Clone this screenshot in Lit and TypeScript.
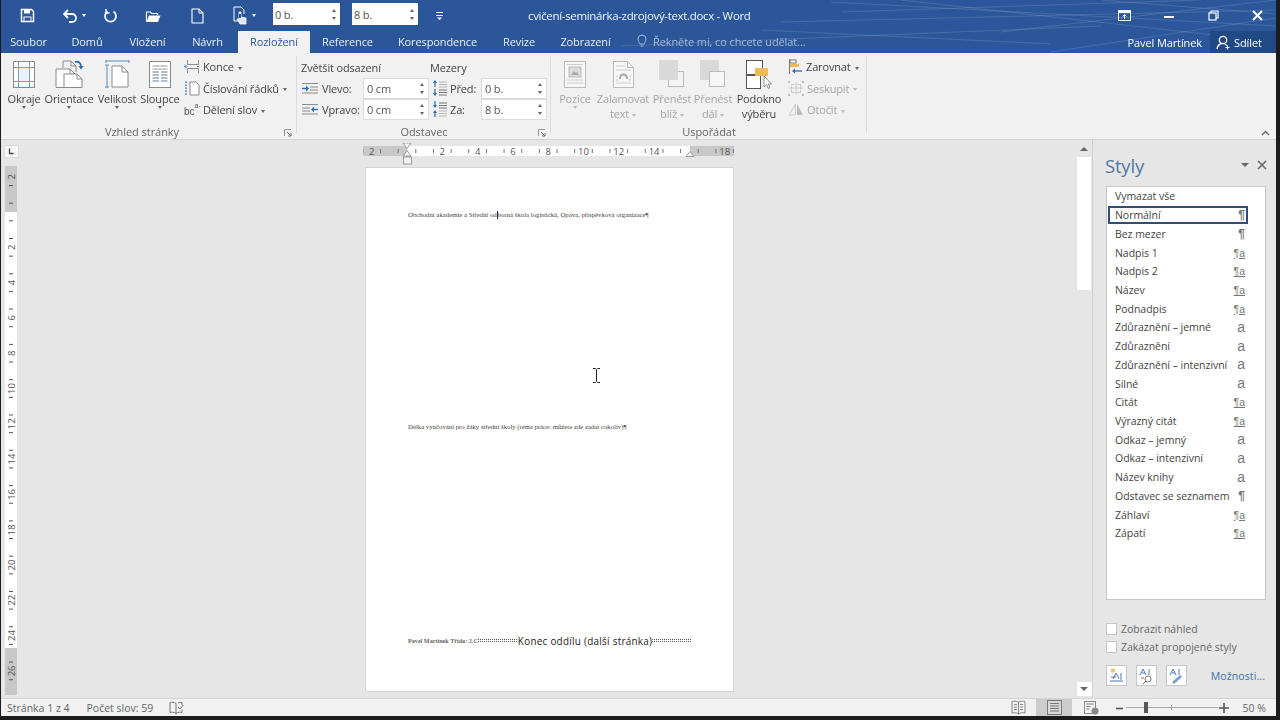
import { LitElement, html, css, svg } from "lit";
import { customElement } from "lit/decorators.js";

const caret = html`<i class="caret"></i>`;
const ic = (w: number, h: number, body: unknown) =>
  html`<svg class="ic" width=${w} height=${h} viewBox="0 0 ${w} ${h}" fill="none">${body}</svg>`;

const I = {
  save: ic(15, 15, svg`<path d="M1.5 1.5h10l2 2v10h-12z" stroke="#fff" stroke-width="1.5"/><rect x="4" y="2" width="6" height="3.5" fill="#fff"/><rect x="4" y="9" width="7" height="4.5" stroke="#fff"/>`),
  undo: ic(16, 15, svg`<path d="M3 6h7a4 4 0 0 1 0 8H7" stroke="#fff" stroke-width="1.8"/><path d="M6 2L2 6l4 4" stroke="#fff" stroke-width="1.8"/>`),
  redo: ic(15, 15, svg`<path d="M4.5 3.5a5.5 5.5 0 1 0 6 0" stroke="#fff" stroke-width="1.8"/><path d="M3 1v4h3.5" stroke="#fff" stroke-width="1.4"/>`),
  open: ic(17, 14, svg`<path d="M1.5 12.5V3h4l1 1.5h6V6" stroke="#fff" stroke-width="1.2"/><path d="M1.5 13h11.5l2.5-6.5H4z" fill="#fff"/>`),
  fresh: ic(13, 16, svg`<path d="M1 1h7l4 4v10H1z" stroke="#fff" stroke-width="1.1"/><path d="M8 1v4h4" stroke="#fff"/>`),
  touch: ic(17, 19, svg`<path d="M3 1h7l3 3v4M3 1v14h4" stroke="#fff" stroke-width="1"/><path d="M8 6v7l-2 0 3 5h6v-6l-5-1V6z" fill="#dfe7f2" stroke="#fff" stroke-width=".8"/><path d="M8 8v4h2V8z" fill="#2b579a"/>`),
  more: ic(9, 9, svg`<path d="M1 1.5h7M1 4.5h7" stroke="#fff"/><path d="M2 6.5h5L4.5 9z" fill="#fff"/>`),
  display: ic(13, 11, svg`<rect x=".5" y=".5" width="12" height="10" stroke="#fff"/><rect x="1" y="1" width="11" height="2" fill="#fff"/><path d="M6.5 9V5M4.5 6.5l2-2 2 2" stroke="#fff"/>`),
  minimize: ic(11, 11, svg`<rect x="0" y="6" width="10" height="2" fill="#fff"/>`),
  restore: ic(11, 11, svg`<rect x="1" y="3" width="7" height="7" stroke="#fff" stroke-width="1.2"/><path d="M3 3V1h7v7H8" stroke="#fff" stroke-width="1.2"/>`),
  close: ic(11, 11, svg`<path d="M1 1l9 9M10 1l-9 9" stroke="#fff" stroke-width="2"/>`),
  bulb: ic(10, 14, svg`<path d="M3 10C2 8 1 7 1 5a4 4 0 0 1 8 0c0 2-1 3-2 5z" stroke="#a8bcd8"/><path d="M3.5 12h3" stroke="#a8bcd8"/>`),
  share: ic(15, 15, svg`<circle cx="7" cy="5" r="3.7" stroke="#fff" stroke-width="1.3"/><path d="M1 14c.5-3 2.5-5 4.5-5.5M8.500 9c1 .3 1.600.8 2.200 1.500" stroke="#fff" stroke-width="1.3"/><path d="M11.500 10.500v4M9.500 12.500h4" stroke="#fff" stroke-width="1.200"/>`),
  margins: ic(22, 27, svg`<rect x=".5" y=".5" width="21" height="26" fill="#fff" stroke="#8a8a8a"/><path d="M5.500 1v25M16.500 1v25M1 6.500h20M1 20.500h20" stroke="#6fa0c8"/><rect x="6" y="7" width="10" height="13" fill="#eaf1f8"/>`),
  orient: ic(29, 28, svg`<path d="M1 9h14l5 5v13.500H1z" fill="#fff" stroke="#8a8a8a"/><path d="M8 1h8l5 5v6" fill="none" stroke="#8a8a8a"/><path d="M8 1v7M16 1v5h5M15 9v5h5" stroke="#8a8a8a"/><path d="M9 14h13l5 5v8.500H9z" fill="#fff" stroke="#8a8a8a"/><path d="M22 14v5h5" stroke="#8a8a8a"/><path d="M20 2c4-1 6 1 6 5" stroke="#2a6db5" stroke-width="1.800"/><path d="M23.500 6h5l-2.500 3.500z" fill="#2a6db5"/>`),
  size: ic(25, 28, svg`<path d="M1 1h23M1 0v3M24 0v3M2 5v23M0 5h4M0 27h4" stroke="#5f8fbd"/><path d="M7 6h10l6 6v15H7z" fill="#fff" stroke="#8a8a8a"/><path d="M17 6v6h6" stroke="#8a8a8a"/>`),
  cols: ic(22, 27, svg`<rect x=".5" y=".5" width="21" height="26" fill="#fff" stroke="#8a8a8a"/><path d="M3.500 5h15M3.500 8h15" stroke="#9a9a9a"/><path d="M3.500 11h6.500M12 11h6.500M3.500 14h6.500M12 14h6.500M3.500 17h6.500M12 17h6.500M3.500 20h6.500M12 20h6.500" stroke="#5f7f9f"/>`),
  breaks: ic(16, 15, svg`<path d="M3.500 1v4.500h11V1M3.500 14V9.500h11V14" stroke="#8a8a8a"/><path d="M0 7.500h3M13 7.500h3" stroke="#3c7fc0" stroke-width="1.200" stroke-dasharray="2 1"/><path d="M1 5.500l2 2-2 2" stroke="#3c7fc0"/>`),
  lines: ic(16, 15, svg`<path d="M6 1h6l3 3v10H6z" fill="#fff" stroke="#8a8a8a"/><path d="M2 1v1M2 4v1M2 7v1M2 10v1M2 13v1" stroke="#3c7fc0"/><path d="M1 1h2M1 4h2M1 7h2M1 10h2M1 13h2" stroke="#3c7fc0"/>`),
  hyph: html`<span class="hyph"><span class="hb">bc</span><span class="ha">a-</span></span>`,
  indL: ic(18, 12, svg`<path d="M1 1.500h16M9 5h8M9 8h8M1 11h16" stroke="#8a8a8a"/><path d="M1 6.500h5" stroke="#2a6db5" stroke-width="1.400"/><path d="M5 3.500l3 3-3 3z" fill="#2a6db5"/>`),
  indR: ic(18, 12, svg`<path d="M1 1.500h16M1 5h8M1 8h8M1 11h16" stroke="#8a8a8a"/><path d="M12 6.500h5" stroke="#2a6db5" stroke-width="1.400"/><path d="M13 3.500l-3 3 3 3z" fill="#2a6db5"/>`),
  spB: ic(16, 16, svg`<path d="M3 1v6" stroke="#2a6db5" stroke-width="1.200"/><path d="M1 3l2-3 2 3z" fill="#2a6db5"/><path d="M3 9v6" stroke="#2a6db5" stroke-width="1.200"/><path d="M1 13l2 3 2-3z" fill="#2a6db5"/><path d="M7 2h8M7 4.500h8M7 7h8" stroke="#b5b5b5"/><path d="M7 10h8M7 12.500h8M7 15h8" stroke="#777"/>`),
  spA: ic(16, 16, svg`<path d="M3 0v6" stroke="#2a6db5" stroke-width="1.200"/><path d="M1 4l2 3 2-3z" fill="#2a6db5"/><path d="M3 10v6" stroke="#2a6db5" stroke-width="1.200"/><path d="M1 12l2-3 2 3z" fill="#2a6db5"/><path d="M7 2h8M7 4.500h8M7 7h8" stroke="#777"/><path d="M7 10h8M7 12.500h8M7 15h8" stroke="#b5b5b5"/>`),
  launcher: ic(8, 8, svg`<path d="M.5 7V.5H7" stroke="#999"/><path d="M3 3l4 4M7 4v3H4" stroke="#777"/>`),
  pos: ic(22, 27, svg`<rect x=".5" y=".5" width="21" height="26" fill="#f7f7f7" stroke="#bbb"/><rect x="5" y="6" width="12" height="10" fill="#dcdcdc" stroke="#bbb"/><path d="M7 14l3-4 2 2 1-1 2 3z" fill="#aaa"/><path d="M3 3.500h16M3 19h16M3 22h16" stroke="#ccc"/>`),
  wrap: ic(21, 27, svg`<path d="M.5.5h14l6 6v20H.5z" fill="#f7f7f7" stroke="#bbb"/><path d="M14.500.5v6h6" stroke="#bbb"/><path d="M3 5h9M3 9h15M3 22h15M3 19h3M15 19h3M3 15h2M16 15h2" stroke="#ccc"/><path d="M7 18c0-6 7-6 7 0" stroke="#aaa" stroke-width="2"/>`),
  fwd: ic(26, 28, svg`<rect x="9.500" y="11.500" width="15" height="15" fill="#f4f4f4" stroke="#bbb"/><rect x="0" y="0" width="19" height="20" fill="#d9d9d9"/>`),
  back: ic(26, 28, svg`<rect x="0" y="0" width="19" height="20" fill="#d9d9d9"/><rect x="9.500" y="11.500" width="15" height="15" fill="#f6f6f6" stroke="#bbb"/>`),
  pane: ic(26, 29, svg`<rect x=".5" y=".5" width="16" height="14" fill="#fff" stroke="#555"/><rect x=".5" y="15.500" width="14" height="13" fill="#fff" stroke="#555"/><rect x="9" y="8" width="13" height="8" fill="#eeb85c"/><path d="M18 16v11l2.500-2.500 2 4 1.500-1-2-3.500h3.500z" fill="#fff" stroke="#777" stroke-width=".8"/>`),
  align: ic(15, 15, svg`<path d="M1.500 0v15" stroke="#777"/><rect x="2" y="1" width="6" height="3" fill="#fff" stroke="#777"/><rect x="2" y="5" width="9" height="3" fill="#eeb85c"/><path d="M5 12h9" stroke="#2a6db5" stroke-width="1.300"/><path d="M7 9.500l-3 2.500 3 2.500z" fill="#2a6db5"/>`),
  group: ic(16, 15, svg`<rect x="3.500" y="3.500" width="9" height="8" stroke="#bbb" stroke-dasharray="2 1"/><path d="M8 1v13M1 7h14" stroke="#ccc"/><rect x="0" y="0" width="2" height="2" fill="#bbb"/><rect x="14" y="0" width="2" height="2" fill="#bbb"/><rect x="0" y="13" width="2" height="2" fill="#bbb"/><rect x="14" y="13" width="2" height="2" fill="#bbb"/>`),
  rotate: ic(16, 13, svg`<path d="M7.500 1L1 12h6.500z" stroke="#ccc"/><path d="M9 1l6 11H9z" fill="#bbb"/>`),
  collapse: ic(9, 6, svg`<path d="M1 5l3.500-3.500L8 5" stroke="#666" stroke-width="1.300"/>`),
  book: ic(15, 14, svg`<path d="M7 2.500C5 1 3 1 1 1.500v10c2-.5 4-.5 6 1 2-1.500 4-1.500 6-1v-3M7 2.500v10M9 2c1-.5 2.500-.8 4-.5V4" stroke="#777"/><path d="M9 6l2 2 3.500-4" stroke="#777"/>`),
  read: ic(15, 15, svg`<path d="M7.500 2C5 1 3 1 1 1.500v11.500c2-.5 4.500-.5 6.500 1 2-1.500 4.500-1.500 6.500-1V1.500C12 1 10 1 7.500 2zM7.500 2v12M3 4.500h3M3 7h3M3 9.500h3M9 4.500h3M9 7h3M9 9.500h3" stroke="#888"/>`),
  layout: ic(15, 15, svg`<rect x=".5" y=".5" width="14" height="14" fill="#d8d8d8" stroke="#777"/><path d="M3 3.500h9M3 6h9M3 8.500h9M3 11h9" stroke="#777"/>`),
  web: ic(15, 14, svg`<rect x=".5" y=".5" width="11" height="12" stroke="#888"/><path d="M2.500 3h7M2.500 5.500h4M2.500 8h3" stroke="#888"/><circle cx="11" cy="10" r="3.500" fill="#888"/>`),
  pm: ic(10, 10, svg`<path d="M1 5.500h7" stroke="#555" stroke-width="1.600"/>`),
  pp: ic(10, 10, svg`<path d="M0 5h10M5 0v10" stroke="#555" stroke-width="1.600"/>`),
  btnA: ic(21, 21, svg`<rect x=".5" y=".5" width="20" height="20" fill="#fff" stroke="#c6c6c6"/><circle cx="7" cy="5.500" r="2.300" fill="#eec878"/><path d="M7 14l3-6 3 6M15 8v7M4 16h13" stroke="#4a78b5"/><path d="M5 12h5" stroke="#4a78b5"/>`),
  btnB: ic(21, 21, svg`<rect x=".5" y=".5" width="20" height="20" fill="#fff" stroke="#c6c6c6"/><path d="M4 10l3-6 3 6M6 8h3M13 4v6" stroke="#4a78b5"/><circle cx="12" cy="14" r="3" stroke="#777"/><path d="M10 16l-3 3M5 13h3" stroke="#777"/>`),
  btnC: ic(21, 21, svg`<rect x=".5" y=".5" width="20" height="20" fill="#fff" stroke="#c6c6c6"/><path d="M4 10l3-6 3 6M6 8h3M13 4v6" stroke="#4a78b5"/><path d="M6 17l8-7 2 2-8 7z" fill="#7a9fd0"/>`),
};

const tabs: [string, number][] = [["Soubor", 55], ["Domů", 62], ["Vložení", 59], ["Návrh", 61], ["Rozložení", 72], ["Reference", 75], ["Korespondence", 105], ["Revize", 58], ["Zobrazení", 75]];
const styles: [string, string][] = [["Normální", "p"], ["Bez mezer", "p"], ["Nadpis 1", "l"], ["Nadpis 2", "l"], ["Název", "l"], ["Podnadpis", "l"], ["Zdůraznění – jemné", "a"], ["Zdůraznění", "a"], ["Zdůraznění – intenzivní", "a"], ["Silné", "a"], ["Citát", "l"], ["Výrazný citát", "l"], ["Odkaz – jemný", "a"], ["Odkaz – intenzivní", "a"], ["Název knihy", "a"], ["Odstavec se seznamem", "p"], ["Záhlaví", "l"], ["Zápatí", "l"]];

const rulerH = () => {
  const x0 = 44, u = 17.65, parts: unknown[] = [];
  for (let c = -2; c <= 18; c += 2) if (c !== 0 && c !== 16)
    parts.push(svg`<text x=${x0 + c * u} y="11.500" text-anchor="middle" class="rt">${Math.abs(c)}</text>`);
  for (let c = -2.5; c < 18.6; c += 1) parts.push(svg`<path d="M${x0 + c * u} 6v4" stroke="#777"/>`);
  return html`<svg class="hr" width="372" height="22" viewBox="0 0 372 22">
    <rect x="0" y="3" width="371" height="10" fill="#c8c8c8"/><rect x="44" y="3" width="283" height="10" fill="#fff"/>${parts}
    <path d="M40 0h8l-4 5.500zM40 13h8l-4-5.500z" fill="#f4f4f4" stroke="#888" stroke-width=".8"/><rect x="40.500" y="14" width="8" height="7" fill="#f4f4f4" stroke="#888" stroke-width=".8"/>
    <path d="M323 13.500l4-5 4 5z" fill="#f4f4f4" stroke="#888" stroke-width=".8"/></svg>`;
};
const rulerV = () => {
  const y0 = 72, u = 17.65, parts: unknown[] = [];
  for (let c = -2; c <= 26; c += 2) if (c !== 0) {
    const y = y0 + c * u;
    parts.push(svg`<text transform="translate(14 ${y}) rotate(-90)" text-anchor="middle" class="rt">${Math.abs(c)}</text>`);
  }
  for (let c = -1.5; c < 27; c += 1) parts.push(svg`<path d="M8 ${y0 + c * u}h4" stroke="#555"/>`);
  return html`<svg class="vr" width="23" height="558" viewBox="0 0 23 558">
    <rect x="3.500" y="5.500" width="14" height="12" fill="#f6f6f6" stroke="#dcdcdc"/><path d="M8.500 8.500v5h4" stroke="#444" stroke-width="1.300" fill="none"/>
    <rect x="4" y="26" width="12" height="46" fill="#c8c8c8"/><rect x="4" y="72" width="12" height="436" fill="#fff"/><rect x="4" y="508" width="12" height="47" fill="#c8c8c8"/>${parts}</svg>`;
};

@customElement("app-root")
export class AppRoot extends LitElement {
  static styles = css`
    :host { display: block; width: 1280px; height: 720px; overflow: hidden; background: #1c1c1c; font-family: "Open Sans", "Noto Sans", sans-serif; font-size: 11px; color: #444; }
    * { box-sizing: border-box; }
    svg.ic { display: block; flex: none; }
    .frame { width: 1275px; height: 716px; margin-left: 1px; display: flex; flex-direction: column; filter: blur(.45px); }
    .caret { display: inline-block; width: 0; height: 0; border: 2.500px solid transparent; border-top: 3px solid #666; border-bottom: 0; vertical-align: middle; margin-left: 4px; }
    .caret.w { border-top-color: #fff; }
    .caret.g { border-top-color: #bbb; }
    .head { position: relative; height: 53px; background: #2b579a; color: #fff; overflow: hidden; flex: none; }
    .lines { position: absolute; inset: 0; }
    .titlebar { position: relative; height: 31px; display: flex; align-items: center; }
    .q { display: flex; align-items: center; justify-content: center; height: 31px; flex: none; }
    .box { background: #fff; color: #555; height: 22px; margin-bottom: 3px; display: flex; align-items: center; padding-left: 2px; font-size: 11px; position: relative; flex: none; letter-spacing: -.2px; }
    .b1 { width: 67px; }
    .b2 { width: 66px; margin-left: 12px; }
    .spin { position: absolute; right: 4px; top: 0; bottom: 0; display: flex; flex-direction: column; justify-content: center; gap: 5px; }
    .spin i { display: block; width: 0; height: 0; border: 2.500px solid transparent; }
    .spin i:first-child { border-bottom: 3px solid #666; border-top: 0; }
    .spin i:last-child { border-top: 3px solid #666; border-bottom: 0; }
    .title { margin-left: 68px; font-size: 11.500px; letter-spacing: -.33px; white-space: nowrap; color: #f2f5fa; }
    .win { margin-left: auto; display: flex; align-items: center; gap: 33px; padding-right: 13.500px; }
    .tabs { position: relative; height: 22px; display: flex; align-items: stretch; }
    .tab { display: flex; align-items: center; justify-content: center; color: #e8eef7; flex: none; white-space: nowrap; font-size: 11px; letter-spacing: -.1px; padding-bottom: 2px; }
    .tab.on { background: #f1f1f1; color: #2b579a; }
    .tell { margin-left: 14px; display: flex; align-items: center; gap: 6px; color: #a8bcd8; font-size: 11px; letter-spacing: -.1px; padding-bottom: 2px; }
    .user { margin-left: auto; display: flex; align-items: center; letter-spacing: -.1px; }
    .share { margin-left: 8px; width: 66px; height: 22px; background: #1f4a85; display: flex; align-items: center; gap: 3px; padding-left: 6px; }
    .ribbon { height: 87px; background: #f1f1f1; border-bottom: 1px solid #d4d4d4; display: flex; flex: none; position: relative; }
    .group { display: flex; flex-direction: column; flex: none; position: relative; }
    .group::after { content: ""; position: absolute; right: 0; top: 3px; bottom: 6px; width: 1px; background: #dcdcdc; }
    .g1 { width: 296px; } .g2 { width: 254px; } .g3 { width: 316px; }
    .gbody { height: 71px; display: flex; flex: none; }
    .glabel { height: 16px; line-height: 16px; text-align: center; color: #666; position: relative; letter-spacing: -.05px; }
    .g1 .glabel { padding-right: 14px; }
    .launch { position: absolute; right: 5px; top: 5px; }
    .big { display: flex; flex-direction: column; align-items: center; padding-top: 7px; flex: none; line-height: 15px; color: #444; white-space: nowrap; letter-spacing: -.15px; }
    .big .pic { height: 28px; display: flex; align-items: center; justify-content: center; margin-bottom: 3px; }
    .big .caret { margin: 0; }
    .big span .caret { margin-left: 3px; }
    .dis { color: #a6a6a6; }
    .small { display: flex; flex-direction: column; padding-top: 3px; white-space: nowrap; letter-spacing: -.15px; }
    .small div { height: 21.500px; display: flex; align-items: center; gap: 3px; color: #444; }
    .small .dis { color: #a6a6a6; }
    .hyph { width: 16px; height: 15px; display: flex; align-items: flex-start; font-family: "Liberation Sans", sans-serif; color: #555; letter-spacing: 0; }
    .ha { font-size: 7px; line-height: 8px; }
    .hb { font-size: 10px; line-height: 11px; margin-top: 4px; }
    .indent { display: grid; grid-template-columns: 62px 66px 3px 49px 66px; grid-template-rows: 20.500px 21px 21px; padding: 4px 0 0 4px; align-items: center; letter-spacing: -.15px; }
    .hdr { color: #444; white-space: nowrap; }
    .hdr2 { grid-column: 3 / 6; padding-left: 1px; }
    .hdr1 { grid-column: 1 / 3; }
    .lab { display: flex; align-items: center; gap: 3px; white-space: nowrap; color: #444; font-size: 11px; }
    .lab.sp { grid-column: 4; gap: 2px; }
    .field { background: #fff; border: 1px solid #dcdcdc; height: 21px; display: flex; align-items: center; padding-left: 3px; position: relative; color: #555; }
    .field.f1 { grid-column: 2; }
    .field.f2 { grid-column: 5; }
    .gbody.t3 { padding-left: 4px; }
    .up { display: flex; justify-content: flex-end; align-items: flex-start; flex: 1; padding: 77px 6px 0 0; }
    .work { flex: 1; display: flex; background: #e6e6e6; min-height: 0; }
    .rulerV { width: 23px; flex: none; }
    .vr, .hr { display: block; }
    .rt { font-family: "Open Sans", sans-serif; font-size: 9.500px; fill: #555; }
    .doc { width: 1052px; flex: none; padding: 3px 0 0 339px; position: relative; overflow: hidden; }
    .page { width: 369px; height: 525px; margin: 2px 0 0 2px; background: #fff; border: 1px solid #d6d6d6; padding-left: 42px; font-family: "Liberation Serif", serif; font-size: 6.780px; color: #444; white-space: nowrap; display: flex; flex-direction: column; }
    .p1 { margin-top: 43px; height: 8px; line-height: 8px; }
    .p2 { margin-top: 204px; height: 8px; line-height: 8px; }
    .p3 { margin-top: 203px; height: 14px; line-height: 14px; display: flex; align-items: center; font-weight: 700; color: #666; font-size: 6.150px; }
    .ins { display: inline-block; width: 1px; height: 8px; background: #222; vertical-align: middle; }
    .brk { flex: none; width: 40px; height: 4px; background-image: repeating-linear-gradient(0deg, #fff 0 1px, transparent 1px 2px), repeating-linear-gradient(90deg, #555 0 1px, #fff 1px 2px); }
    .brk.e { width: 39px; }
    .p3 span { font-family: "Open Sans", sans-serif; font-weight: 400; font-size: 9.900px; letter-spacing: .28px; color: #222; }
    .ibeam { position: absolute; left: 568px; top: 228px; }
    .scroll { width: 16px; flex: none; display: flex; flex-direction: column; align-items: center; padding: 7px 0 2px; background: #e6e6e6; }
    .scroll .thumb { width: 14px; height: 133px; background: #fff; margin-top: 6px; }
    .arrow-u { width: 0; height: 0; border: 4px solid transparent; border-bottom: 4px solid #666; border-top: 0; }
    .dn { margin-top: auto; width: 15px; height: 14px; background: #fff; display: flex; align-items: center; justify-content: center; }
    .arrow-d { width: 0; height: 0; border: 4px solid transparent; border-top: 4px solid #666; border-bottom: 0; }
    .pane { flex: 1; border-left: 1px solid #cfcfcf; padding-left: 13px; display: flex; flex-direction: column; position: relative; }
    .phead { height: 46px; display: flex; align-items: center; padding: 4px 9px 0 0; }
    .phead h2 { margin: 0 0 0 -1px; font-weight: 400; font-size: 18.500px; color: #4f77a8; flex: 1; letter-spacing: -.2px; }
    .phead .arr { width: 0; height: 0; border: 4px solid transparent; border-top: 4px solid #666; border-bottom: 0; margin-right: 8px; }
    .list { width: 160px; height: 414px; background: #fff; border: 1px solid #c6c6c6; padding: 0 1px; flex: none; }
    .item { height: 18.720px; width: 140px; display: flex; align-items: center; justify-content: space-between; padding: 0 3px 0 7px; color: #444; white-space: nowrap; font-size: 10.500px; letter-spacing: -.04px; }
    .item.sel { border: 2px solid #2f4d78; padding: 0 1px 0 5px; }
    .g-p { font-family: "Liberation Sans", sans-serif; font-weight: 700; font-size: 12px; color: #777; }
    .g-l { font-family: "Liberation Sans", sans-serif; font-size: 10.500px; color: #777; text-decoration: underline; }
    .g-a { font-family: "Liberation Sans", sans-serif; font-size: 14px; color: #777; line-height: 13px; }
    .checks { margin-top: 23px; display: flex; flex-direction: column; gap: 6px; }
    .chk { display: flex; align-items: center; gap: 4px; height: 12px; color: #666; font-size: 10.500px; }
    .chk i { width: 11px; height: 12px; background: #fff; border: 1px solid #c6c6c6; display: block; }
    .acts { margin-top: 12px; display: flex; gap: 9px; align-items: center; padding-right: 11px; }
    .acts a { margin-left: auto; color: #3f6fb0; font-size: 10.500px; letter-spacing: .1px; }
    .status { height: 18px; flex: none; background: #f1f1f1; border-top: 1px solid #d4d4d4; display: flex; align-items: center; padding-left: 6px; color: #666; font-size: 10.500px; }
    .status .c { margin-left: 17px; }
    .status .bk { margin-left: 16px; }
    .views { margin-left: auto; display: flex; align-items: center; height: 17px; }
    .vb { width: 36px; height: 17px; display: flex; align-items: center; justify-content: center; }
    .vb.on { background: #cdcdcd; }
    .vb.wb { margin-left: 1px; }
    .zoom { margin-left: 6px; width: 114px; display: flex; align-items: center; gap: 1px; }
    .track { flex: 1; height: 1px; background: #aaa; position: relative; }
    .track b { position: absolute; left: 18px; top: -5px; width: 4px; height: 11px; background: #555; }
    .track u { position: absolute; left: 45px; top: -2px; width: 1px; height: 5px; background: #aaa; }
    .pct { width: 47px; text-align: right; padding-right: 10px; flex: none; white-space: nowrap; }
  `;

  private field(v: string, cls: string) {
    return html`<div class="field ${cls}">${v}<span class="spin"><i></i><i></i></span></div>`;
  }

  render() {
    const dis = (cls = "") => html`<i class="caret g ${cls}"></i>`;
    return html`<div class="frame">
      <header class="head">
        <svg class="lines" width="1275" height="53" viewBox="0 0 1275 53" fill="none" stroke="#fff" stroke-opacity=".13">
          <path d="M780 22L1275 10M830 2L1275 26M900 0L1275 42M620 46L1100 26M1000 32L1275 0M1050 52L1275 18M840 12L1200 0M1100 0L1275 14M760 30L1050 44"/>
        </svg>
        <div class="titlebar">
          <div class="q" style="width:52px">${I.save}</div>
          <div class="q" style="width:42px">${I.undo}<i class="caret w"></i></div>
          <div class="q" style="width:30px">${I.redo}</div>
          <div class="q" style="width:56px">${I.open}</div>
          <div class="q" style="width:32px">${I.fresh}</div>
          <div class="q" style="width:60px">${I.touch}<i class="caret w"></i></div>
          <div class="box b1">0 b.<span class="spin"><i></i><i></i></span></div>
          <div class="box b2">8 b.<span class="spin"><i></i><i></i></span></div>
          <div class="q" style="width:42px">${I.more}</div>
          <div class="title">cvičení-seminárka-zdrojový-text.docx - Word</div>
          <div class="win">${I.display}${I.minimize}${I.restore}${I.close}</div>
        </div>
        <nav class="tabs">
          ${tabs.map(([t, w]) => html`<div class="tab ${t === "Rozložení" ? "on" : ""}" style="width:${w}px">${t}</div>`)}
          <div class="tell">${I.bulb}<span>Řekněte mi, co chcete udělat...</span></div>
          <div class="user">Pavel Martínek<div class="share">${I.share}Sdílet</div></div>
        </nav>
      </header>

      <section class="ribbon">
        <div class="group g1">
          <div class="gbody">
            <div class="big" style="width:46px"><div class="pic">${I.margins}</div>Okraje${caret}</div>
            <div class="big" style="width:44px"><div class="pic">${I.orient}</div>Orientace${caret}</div>
            <div class="big" style="width:52px"><div class="pic">${I.size}</div>Velikost${caret}</div>
            <div class="big" style="width:34px"><div class="pic">${I.cols}</div>Sloupce${caret}</div>
            <div class="small" style="margin-left:7px">
              <div>${I.breaks}<span>Konce${caret}</span></div>
              <div>${I.lines}<span>Číslování řádků${caret}</span></div>
              <div>${I.hyph}<span>Dělení slov${caret}</span></div>
            </div>
          </div>
          <div class="glabel">Vzhled stránky<span class="launch">${I.launcher}</span></div>
        </div>
        <div class="group g2">
          <div class="gbody">
            <div class="indent">
              <div class="hdr hdr1">Zvětšit odsazení</div><div class="hdr hdr2">Mezery</div>
              <div class="lab">${I.indL}Vlevo:</div>${this.field("0 cm", "f1")}<div class="lab sp">${I.spB}Před:</div>${this.field("0 b.", "f2")}
              <div class="lab">${I.indR}Vpravo:</div>${this.field("0 cm", "f1")}<div class="lab sp">${I.spA}Za:</div>${this.field("8 b.", "f2")}
            </div>
          </div>
          <div class="glabel">Odstavec<span class="launch">${I.launcher}</span></div>
        </div>
        <div class="group g3">
          <div class="gbody t3">
            <div class="big dis" style="width:40px"><div class="pic">${I.pos}</div>Pozice${dis()}</div>
            <div class="big dis" style="width:56px"><div class="pic">${I.wrap}</div>Zalamovat<span>text${dis()}</span></div>
            <div class="big dis" style="width:42px"><div class="pic">${I.fwd}</div>Přenést<span>blíž${dis()}</span></div>
            <div class="big dis" style="width:40px"><div class="pic">${I.back}</div>Přenést<span>dál${dis()}</span></div>
            <div class="big" style="width:52px"><div class="pic">${I.pane}</div>Podokno<span>výběru</span></div>
            <div class="small" style="margin-left:3px">
              <div>${I.align}<span>Zarovnat${caret}</span></div>
              <div class="dis">${I.group}<span>Seskupit${dis()}</span></div>
              <div class="dis">${I.rotate}<span>Otočit${dis()}</span></div>
            </div>
          </div>
          <div class="glabel">Uspořádat</div>
        </div>
        <div class="up">${I.collapse}</div>
      </section>

      <main class="work">
        <div class="rulerV">${rulerV()}</div>
        <div class="doc">
          ${rulerH()}
          <div class="page">
            <div class="p1">Obchodní akademie a Střední od<i class="ins"></i>borná škola logistická, Opava, příspěvková organizace¶</div>
            <div class="p2">Délka vyučování pro žáky střední školy (téma práce: můžete zde zadat cokoliv)¶</div>
            <div class="p3">Pavel Martínek Třída: 2.C<i class="brk"></i><span>Konec oddílu (další stránka)</span><i class="brk e"></i></div>
          </div>
          <svg class="ibeam" width="9" height="15" viewBox="0 0 9 15" fill="none" stroke="#222"><path d="M1 .5h2.500l1 1 1-1H8M4.500 1.500v12M1 14.500h2.500l1-1 1 1H8"/></svg>
        </div>
        <div class="scroll"><i class="arrow-u"></i><div class="thumb"></div><div class="dn"><i class="arrow-d"></i></div></div>
        <aside class="pane">
          <div class="phead"><h2>Styly</h2><i class="arr"></i>${ic(10, 10, svg`<path d="M1 1l8 8M9 1l-8 8" stroke="#666" stroke-width="1.500"/>`)}</div>
          <div class="list">
            <div class="item">Vymazat vše</div>
            ${styles.map(([n, k]) => html`<div class="item ${n === "Normální" ? "sel" : ""}"><span>${n}</span>${k === "p" ? html`<span class="g-p">¶</span>` : k === "l" ? html`<span class="g-l">¶a</span>` : html`<span class="g-a">a</span>`}</div>`)}
          </div>
          <div class="checks">
            <div class="chk"><i></i>Zobrazit náhled</div>
            <div class="chk"><i></i>Zakázat propojené styly</div>
          </div>
          <div class="acts">${I.btnA}${I.btnB}${I.btnC}<a>Možnosti...</a></div>
        </aside>
      </main>

      <footer class="status">
        <span>Stránka 1 z 4</span><span class="c">Počet slov: 59</span><span class="bk">${I.book}</span>
        <div class="views"><div class="vb">${I.read}</div><div class="vb on">${I.layout}</div><div class="vb wb">${I.web}</div></div>
        <div class="zoom">${I.pm}<div class="track"><b></b><u></u></div>${I.pp}</div>
        <div class="pct">50 %</div>
      </footer>
    </div>`;
  }
}
